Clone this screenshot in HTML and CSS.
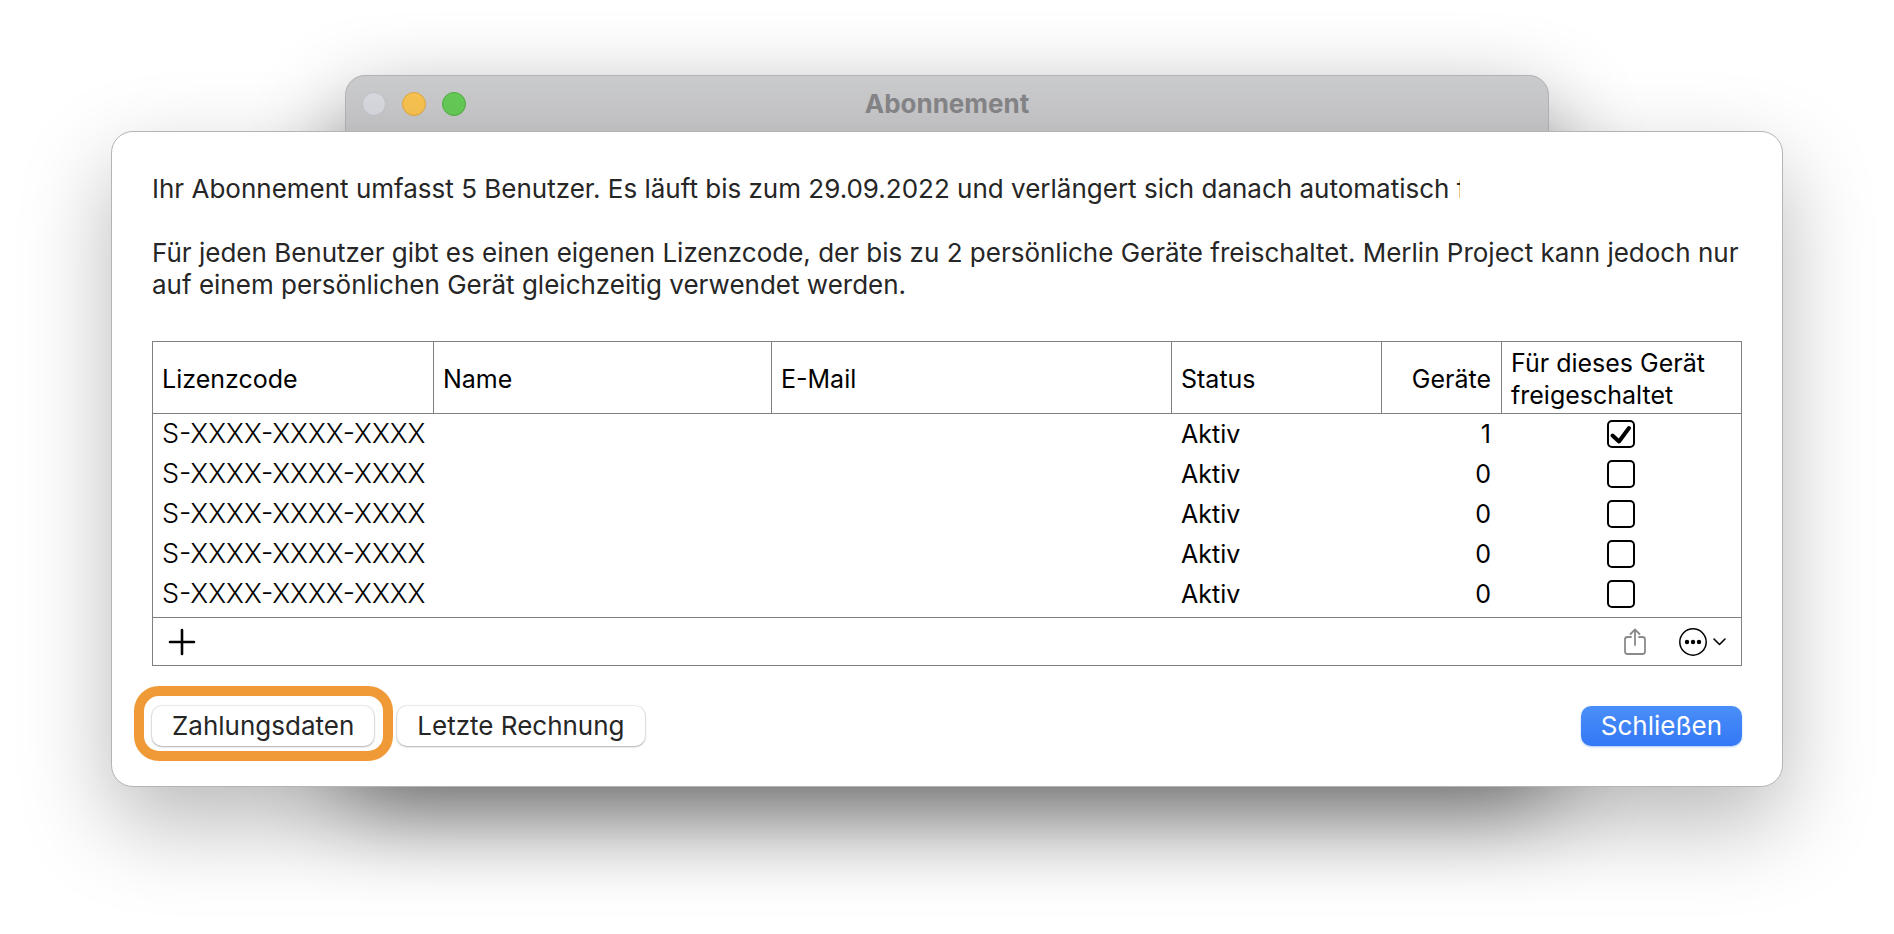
FILE: index.html
```
<!DOCTYPE html>
<html lang="de">
<head>
  <meta charset="UTF-8">
  <title>Abonnement</title>
  <link rel="stylesheet" href="styles.css">
</head>
<body>
  <div class="desktop">
    <section class="window">
      <header class="titlebar">
        <div class="lights">
          <span class="light"></span>
          <span class="light yellow"></span>
          <span class="light green"></span>
        </div>
        <h1>Abonnement</h1>
      </header>
    </section>

    <main class="sheet">
      <p class="summary">Ihr Abonnement umfasst 5 Benutzer. Es läuft bis zum 29.09.2022 und verlängert sich danach automatisch f</p>
      <p class="info">Für jeden Benutzer gibt es einen eigenen Lizenzcode, der bis zu 2 persönliche Geräte freischaltet. Merlin Project kann jedoch nur auf einem persönlichen Gerät gleichzeitig verwendet werden.</p>

      <div class="licenses">
        <table>
          <colgroup>
            <col class="col-code">
            <col class="col-name">
            <col class="col-mail">
            <col class="col-status">
            <col class="col-devices">
            <col>
          </colgroup>
          <thead>
            <tr>
              <th>Lizenzcode</th>
              <th>Name</th>
              <th>E-Mail</th>
              <th>Status</th>
              <th class="num">Geräte</th>
              <th>Für dieses Gerät freigeschaltet</th>
            </tr>
          </thead>
          <tbody>
            <tr>
              <td class="code">S-XXXX-XXXX-XXXX</td><td></td><td></td><td>Aktiv</td><td class="num">1</td>
              <td class="tick"><label><input type="checkbox" aria-label="Freigeschaltet" checked><svg viewBox="0 0 28 28"><path d="M5.5 15.5L12 21.5L22 8"/></svg></label></td>
            </tr>
            <tr>
              <td class="code">S-XXXX-XXXX-XXXX</td><td></td><td></td><td>Aktiv</td><td class="num">0</td>
              <td class="tick"><label><input type="checkbox" aria-label="Freigeschaltet"><svg viewBox="0 0 28 28"><path d="M5.5 15.5L12 21.5L22 8"/></svg></label></td>
            </tr>
            <tr>
              <td class="code">S-XXXX-XXXX-XXXX</td><td></td><td></td><td>Aktiv</td><td class="num">0</td>
              <td class="tick"><label><input type="checkbox" aria-label="Freigeschaltet"><svg viewBox="0 0 28 28"><path d="M5.5 15.5L12 21.5L22 8"/></svg></label></td>
            </tr>
            <tr>
              <td class="code">S-XXXX-XXXX-XXXX</td><td></td><td></td><td>Aktiv</td><td class="num">0</td>
              <td class="tick"><label><input type="checkbox" aria-label="Freigeschaltet"><svg viewBox="0 0 28 28"><path d="M5.5 15.5L12 21.5L22 8"/></svg></label></td>
            </tr>
            <tr>
              <td class="code">S-XXXX-XXXX-XXXX</td><td></td><td></td><td>Aktiv</td><td class="num">0</td>
              <td class="tick"><label><input type="checkbox" aria-label="Freigeschaltet"><svg viewBox="0 0 28 28"><path d="M5.5 15.5L12 21.5L22 8"/></svg></label></td>
            </tr>
          </tbody>
        </table>
        <div class="toolbar">
          <button class="icon" aria-label="Hinzufügen">
            <svg width="28" height="28" viewBox="0 0 28 28"><path d="M14 2V26M2 14H26" stroke-width="2.6"/></svg>
          </button>
          <button class="icon share" aria-label="Teilen" disabled>
            <svg width="28" height="28" viewBox="0 0 28 28"><path d="M10 9H6.500Q4 9 4 11.500V23.500Q4 26 6.500 26H21.500Q24 26 24 23.500V11.500Q24 9 21.500 9H18M14 17V2M9.500 6L14 1.500L18.500 6" stroke-width="1.800"/></svg>
          </button>
          <button class="icon more" aria-label="Weitere Aktionen">
            <svg width="48" height="28" viewBox="0 0 48 28"><circle cx="14" cy="14" r="13.200" stroke-width="1.500"/><g class="dots"><circle cx="8" cy="14" r="2.200"/><circle cx="14" cy="14" r="2.200"/><circle cx="20" cy="14" r="2.200"/></g><path d="M35 11L40.500 16.500L46 11" stroke-width="1.600"/></svg>
          </button>
        </div>
      </div>

      <div class="actions">
        <button class="btn marked">Zahlungsdaten</button>
        <button class="btn">Letzte Rechnung</button>
        <button class="btn primary">Schließen</button>
      </div>
    </main>
  </div>
</body>
</html>
```
FILE: styles.css
```
* { box-sizing: border-box; }
body {
  margin: 0;
  background: #fff;
  color: #000;
  font-family: Inter, "Liberation Sans", sans-serif;
  font-size: 25px;
  line-height: 32px;
  overflow-x: hidden;
}
.desktop {
  display: grid;
  padding: 75px 111px 140px;
}
.window, .sheet { grid-area: 1 / 1; }
.window {
  width: 72%;
  margin: 0 auto 20px;
  border-radius: 20px;
  border: 1px solid #b4b4b6;
  background: #c2c2c5;
  box-shadow: 0 36px 90px rgba(0, 0, 0, 0.48);
}
.titlebar {
  display: grid;
  grid-template-columns: 1fr auto 1fr;
  align-items: center;
  height: 56px;
  padding: 0 16px;
  border-radius: 20px 20px 0 0;
  background: linear-gradient(#cacbcd, #c8c8cb);
}
.titlebar h1 {
  margin: 0;
  font-size: 26px;
  font-weight: 700;
  color: #868688;
}
.lights {
  display: flex;
  gap: 16px;
}
.light {
  width: 24px;
  height: 24px;
  border-radius: 50%;
  border: 1px solid #c2c3c9;
  background: #d9dae0;
}
.light.yellow { background: #f8c351; border-color: #dfa73f; }
.light.green { background: #65cb57; border-color: #53ac42; }

.sheet {
  position: relative;
  margin-top: 56px;
  padding: 41px 40px 40px;
  border: 1px solid #b4b4b4;
  border-radius: 22px;
  background: #fff;
  box-shadow: 0 36px 90px rgba(0, 0, 0, 0.28);
}
p {
  margin: 0;
  font-size: 26px;
  color: #262626;
}
.summary {
  max-width: 1308px;
  margin-bottom: 32px;
  white-space: nowrap;
  overflow: hidden;
}
.info { margin-bottom: 40px; }

.licenses { border: 1px solid #808080; }
table {
  width: 100%;
  margin-bottom: 3px;
  table-layout: fixed;
  border-collapse: separate;
  border-spacing: 0;
}
.col-code { width: 281px; }
.col-name { width: 338px; }
.col-mail { width: 400px; }
.col-status { width: 210px; }
.col-devices { width: 120px; }
th {
  height: 72px;
  padding: 3px 10px 0 9px;
  font-weight: 400;
  text-align: left;
  border-right: 1px solid #808080;
  border-bottom: 1px solid #808080;
}
th:last-child { border-right: none; }
td {
  height: 40px;
  padding: 0 11px 0 9px;
  white-space: nowrap;
}
.num { text-align: right; }
.code {
  font-size: 27px;
  font-weight: 300;
}
.tick label {
  display: grid;
  width: 28px;
  height: 28px;
  margin: 0 auto;
}
.tick input {
  grid-area: 1 / 1;
  appearance: none;
  width: 28px;
  height: 28px;
  margin: 0;
  border: 2px solid #000;
  border-radius: 5px;
}
.tick svg {
  grid-area: 1 / 1;
  visibility: hidden;
  fill: none;
  stroke: #000;
  stroke-width: 4;
  stroke-linecap: round;
  stroke-linejoin: round;
  pointer-events: none;
}
.tick input:checked + svg { visibility: visible; }

.toolbar {
  display: flex;
  align-items: center;
  height: 48px;
  padding: 0 14px 0 15px;
  border-top: 1px solid #808080;
}
.icon {
  display: flex;
  padding: 0;
  border: none;
  background: none;
  color: #000;
}
.icon svg {
  fill: none;
  stroke: currentColor;
  stroke-linecap: round;
  stroke-linejoin: round;
}
.icon .dots { fill: currentColor; stroke: none; }
.share { margin-left: auto; color: #8a8a8a; }
.more { margin-left: 30px; }

.actions {
  display: flex;
  gap: 23px;
  margin-top: 40px;
}
.btn {
  position: relative;
  height: 40px;
  padding: 0 20px;
  border: none;
  border-radius: 10px;
  background: #fff;
  color: #262626;
  font: inherit;
  font-size: 26px;
  box-shadow: 0 0 1px 1px rgba(0, 0, 0, 0.08), 0 1px 2px rgba(0, 0, 0, 0.25);
}
.marked::after {
  content: "";
  position: absolute;
  inset: -20px -19px -15px -18px;
  border: 10px solid #f09a37;
  border-radius: 25px;
}
.primary {
  margin-left: auto;
  background: linear-gradient(#4a8ff8, #3478f6);
  color: #fff;
  box-shadow: 0 1px 2px rgba(52, 120, 246, 0.4);
}
```
